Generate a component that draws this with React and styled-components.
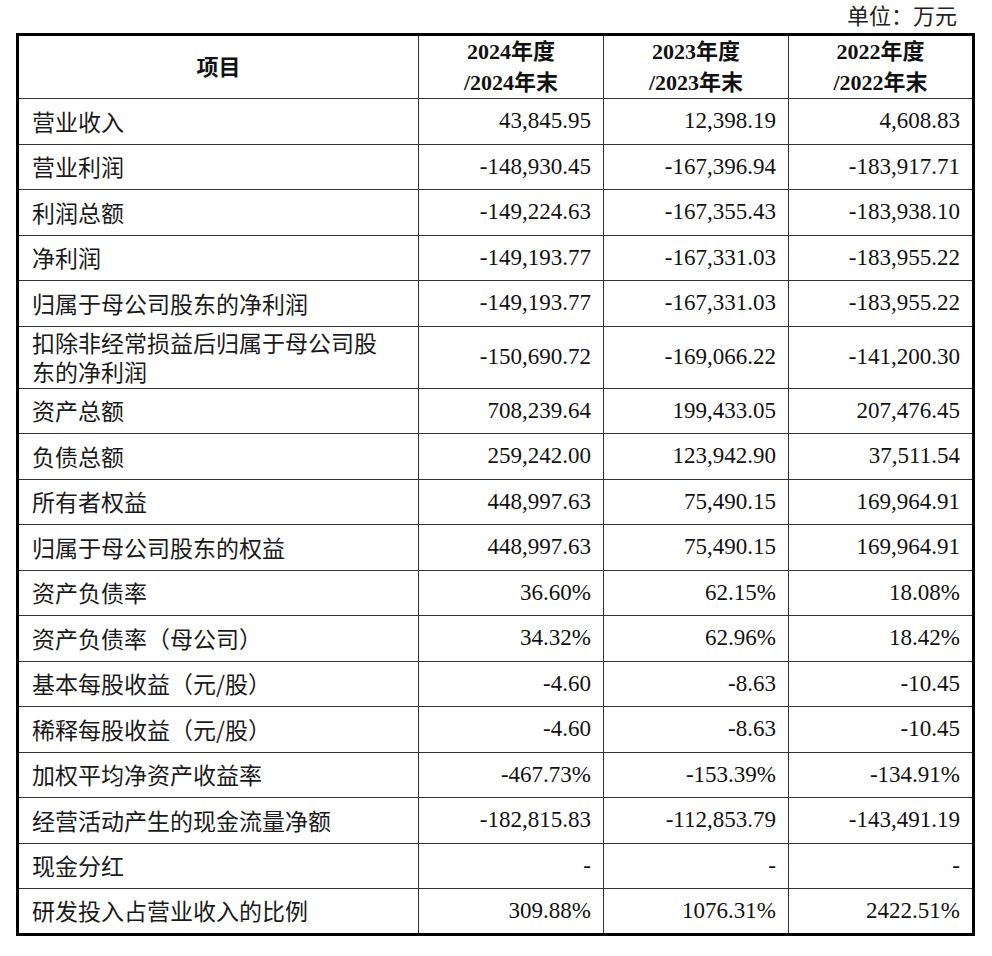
import styled, { createGlobalStyle } from 'styled-components';

const GlobalStyle = createGlobalStyle`
  html, body {
    margin: 0;
    padding: 0;
    background: #fff;
  }
`;

const Page = styled.div`
  width: 956px;
  padding: 2px 0 0 16px;
  color: #111;
  font-family: 'Liberation Serif', 'Noto Sans CJK SC', serif;
`;

const Unit = styled.div`
  height: 31px;
  line-height: 30px;
  padding-right: 15px;
  text-align: right;
  font-family: 'Liberation Serif', 'Noto Sans CJK SC', serif;
  font-size: 22px;
  color: #222;
`;

const Table = styled.table`
  width: 956px;
  border-collapse: collapse;
  table-layout: fixed;
  border: 3px solid #000;
`;

const HeadCell = styled.th`
  height: 61px;
  padding: 0;
  border: 1px solid #333;
  font-family: 'Liberation Serif', 'Noto Sans CJK SC', serif;
  font-weight: bold;
  font-size: 22px;
  line-height: 31px;
  text-align: center;
  vertical-align: middle;
`;

const Row = styled.tr`
  height: ${(p) => (p.$tall ? '62px' : '45.5px')};
`;

const Label = styled.td`
  padding: 0 24px 0 13px;
  border: 1px solid #333;
  font-family: 'Noto Sans CJK SC', sans-serif;
  font-size: 23px;
  line-height: 29px;
  color: #1a1a1a;
  vertical-align: middle;
`;

const Num = styled.td`
  padding: 0 12px 0 0;
  border: 1px solid #333;
  font-family: 'Liberation Serif', serif;
  font-size: 23px;
  text-align: right;
  vertical-align: middle;
  color: #111;
`;

const rows = [
  ['营业收入', '43,845.95', '12,398.19', '4,608.83'],
  ['营业利润', '-148,930.45', '-167,396.94', '-183,917.71'],
  ['利润总额', '-149,224.63', '-167,355.43', '-183,938.10'],
  ['净利润', '-149,193.77', '-167,331.03', '-183,955.22'],
  ['归属于母公司股东的净利润', '-149,193.77', '-167,331.03', '-183,955.22'],
  ['扣除非经常损益后归属于母公司股东的净利润', '-150,690.72', '-169,066.22', '-141,200.30'],
  ['资产总额', '708,239.64', '199,433.05', '207,476.45'],
  ['负债总额', '259,242.00', '123,942.90', '37,511.54'],
  ['所有者权益', '448,997.63', '75,490.15', '169,964.91'],
  ['归属于母公司股东的权益', '448,997.63', '75,490.15', '169,964.91'],
  ['资产负债率', '36.60%', '62.15%', '18.08%'],
  ['资产负债率（母公司）', '34.32%', '62.96%', '18.42%'],
  ['基本每股收益（元/股）', '-4.60', '-8.63', '-10.45'],
  ['稀释每股收益（元/股）', '-4.60', '-8.63', '-10.45'],
  ['加权平均净资产收益率', '-467.73%', '-153.39%', '-134.91%'],
  ['经营活动产生的现金流量净额', '-182,815.83', '-112,853.79', '-143,491.19'],
  ['现金分红', '-', '-', '-'],
  ['研发投入占营业收入的比例', '309.88%', '1076.31%', '2422.51%'],
];

const years = ['2024', '2023', '2022'];

export default function App() {
  return (
    <Page>
      <GlobalStyle />
      <Unit>单位：万元</Unit>
      <Table>
        <colgroup>
          <col style={{ width: 401 }} />
          <col style={{ width: 185 }} />
          <col style={{ width: 185 }} />
          <col style={{ width: 185 }} />
        </colgroup>
        <thead>
          <tr>
            <HeadCell>项目</HeadCell>
            {years.map((y) => (
              <HeadCell key={y}>
                {y}年度
                <br />/{y}年末
              </HeadCell>
            ))}
          </tr>
        </thead>
        <tbody>
          {rows.map(([name, ...vals]) => (
            <Row key={name} $tall={name.length > 15}>
              <Label>{name}</Label>
              {vals.map((v, i) => (
                <Num key={i}>{v}</Num>
              ))}
            </Row>
          ))}
        </tbody>
      </Table>
    </Page>
  );
}
